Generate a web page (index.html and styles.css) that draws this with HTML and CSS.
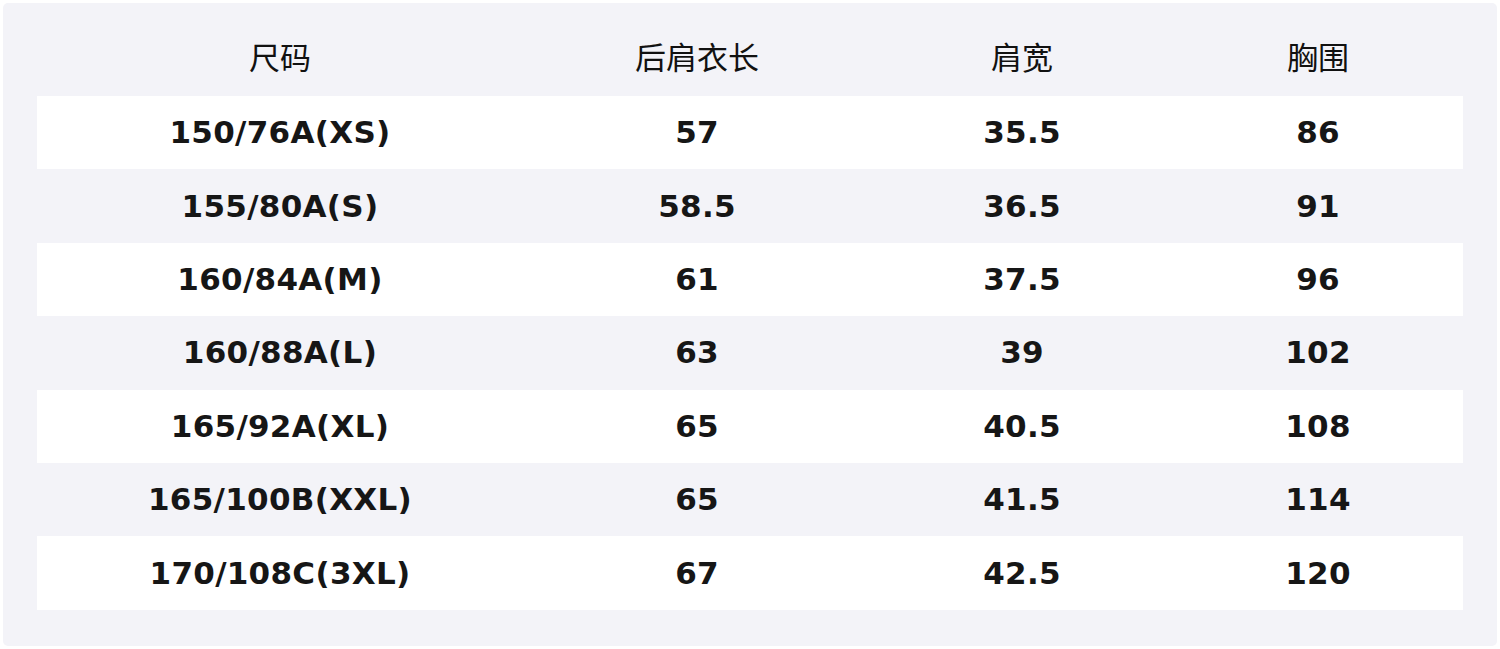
FILE: index.html
```html
<!DOCTYPE html>
<html lang="zh">
<head>
<meta charset="utf-8">
<title>尺码表</title>
<link rel="stylesheet" href="styles.css">
</head>
<body>
<div class="panel">
  <div class="row head">
    <div class="cell">尺码</div>
    <div class="cell">后肩衣长</div>
    <div class="cell">肩宽</div>
    <div class="cell">胸围</div>
  </div>
  <div class="row white">
    <div class="cell">150/76A(XS)</div><div class="cell">57</div><div class="cell">35.5</div><div class="cell">86</div>
  </div>
  <div class="row">
    <div class="cell">155/80A(S)</div><div class="cell">58.5</div><div class="cell">36.5</div><div class="cell">91</div>
  </div>
  <div class="row white">
    <div class="cell">160/84A(M)</div><div class="cell">61</div><div class="cell">37.5</div><div class="cell">96</div>
  </div>
  <div class="row">
    <div class="cell">160/88A(L)</div><div class="cell">63</div><div class="cell">39</div><div class="cell">102</div>
  </div>
  <div class="row white">
    <div class="cell">165/92A(XL)</div><div class="cell">65</div><div class="cell">40.5</div><div class="cell">108</div>
  </div>
  <div class="row">
    <div class="cell">165/100B(XXL)</div><div class="cell">65</div><div class="cell">41.5</div><div class="cell">114</div>
  </div>
  <div class="row white">
    <div class="cell">170/108C(3XL)</div><div class="cell">67</div><div class="cell">42.5</div><div class="cell">120</div>
  </div>
</div>
</body>
</html>
```

FILE: styles.css
```css
html, body {
  margin: 0;
  padding: 0;
  background: #ffffff;
}

body {
  padding: 3px;
}

.panel {
  box-sizing: border-box;
  width: 1494px;
  height: 643px;
  background: #f3f3f8;
  border-radius: 5px;
  padding: 19.6px 34px 0 34px;
  display: flex;
  flex-direction: column;
}

.row {
  display: grid;
  grid-template-columns: 486px 348px 302px 290px;
  height: 73.4px;
  flex: none;
}

.row.white {
  background: #ffffff;
}

.cell {
  display: flex;
  align-items: center;
  justify-content: center;
  font-family: "DejaVu Sans", "Noto Sans CJK SC", sans-serif;
  font-weight: bold;
  font-size: 31px;
  letter-spacing: 0.3px;
  color: #161616;
  padding-bottom: 1px;
}

.head .cell {
  font-family: "Noto Sans CJK SC", "DejaVu Sans", sans-serif;
  font-weight: normal;
  font-size: 31px;
  letter-spacing: 0;
  color: #111111;
  padding-bottom: 8px;
}
```
